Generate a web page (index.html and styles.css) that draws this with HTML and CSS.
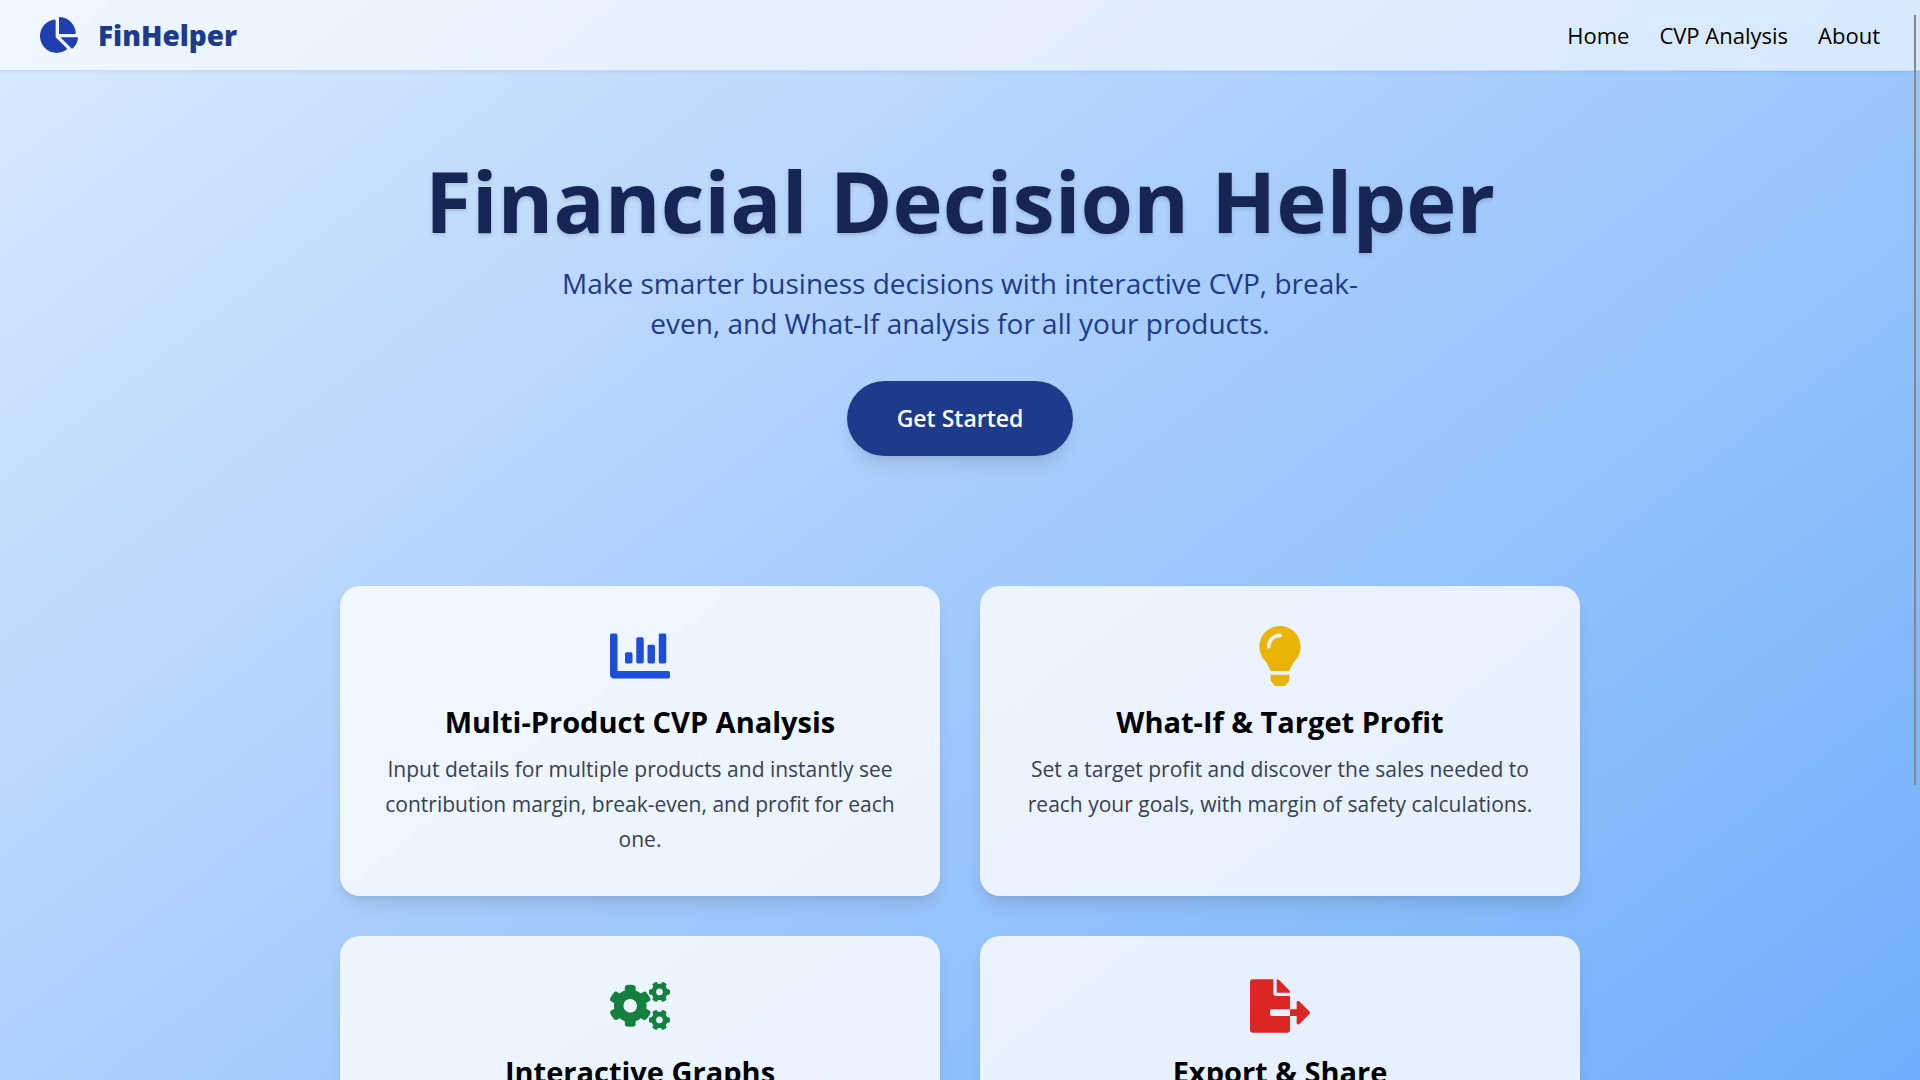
FILE: index.html
```html
<!DOCTYPE html>
<html lang="en">
<head>
<meta charset="utf-8">
<meta name="viewport" content="width=device-width, initial-scale=1">
<title>FinHelper</title>
<link rel="stylesheet" href="styles.css">
</head>
<body>
<header class="navbar">
  <a class="brand" href="#">
    <svg class="brand-icon" viewBox="0 0 544 512" aria-hidden="true"><path d="M527.79 288H290.5l158.03 158.03c6.04 6.04 15.98 6.53 22.19.68 38.7-36.46 65.32-85.61 73.13-140.86 1.34-9.46-6.51-17.85-16.06-17.85zm-15.83-64.8C503.72 103.74 408.26 8.28 288.8.04 279.68-.59 272 7.1 272 16.24V240h223.77c9.14 0 16.82-7.68 16.19-16.8zM224 288V50.71c0-9.55-8.39-17.4-17.84-16.06C86.99 51.49-4.1 155.6.14 280.37 4.5 408.51 114.83 513.59 243.03 511.98c50.4-.63 96.97-16.87 135.26-44.03 7.9-5.6 8.42-17.23 1.57-24.08L224 288z"/></svg>
    <span class="brand-name">FinHelper</span>
  </a>
  <nav class="links">
    <a href="#">Home</a>
    <a href="#cvp">CVP Analysis</a>
    <a href="#about">About</a>
  </nav>
</header>
<main>
  <section class="hero">
    <h1 class="title">Financial Decision Helper</h1>
    <p class="subtitle">Make smarter business decisions with interactive CVP, break-even, and What-If analysis for all your products.</p>
    <button class="cta" type="button">Get Started</button>
  </section>
  <section class="features">
    <article class="card">
      <svg class="card-icon blue" viewBox="0 0 512 512" aria-hidden="true"><path d="M332.8 320h38.4c6.4 0 12.8-6.4 12.8-12.8V172.8c0-6.4-6.4-12.8-12.8-12.8h-38.4c-6.4 0-12.8 6.4-12.8 12.8v134.4c0 6.4 6.4 12.8 12.8 12.8zm96 0h38.4c6.4 0 12.8-6.4 12.8-12.8V76.8c0-6.4-6.4-12.8-12.8-12.8h-38.4c-6.4 0-12.8 6.4-12.8 12.8v230.4c0 6.4 6.4 12.8 12.8 12.8zm-288 0h38.4c6.4 0 12.8-6.4 12.8-12.8v-70.4c0-6.4-6.4-12.8-12.8-12.8h-38.4c-6.4 0-12.8 6.4-12.8 12.8v70.4c0 6.4 6.4 12.8 12.8 12.8zm96 0h38.4c6.4 0 12.8-6.4 12.8-12.8V108.8c0-6.4-6.4-12.8-12.8-12.8h-38.4c-6.4 0-12.8 6.4-12.8 12.8v198.4c0 6.4 6.4 12.8 12.8 12.8zM496 384H64V80c0-8.84-7.16-16-16-16H16C7.16 64 0 71.16 0 80v336c0 17.67 14.33 32 32 32h464c8.84 0 16-7.16 16-16v-32c0-8.84-7.16-16-16-16z"/></svg>
      <h2 class="card-title">Multi-Product CVP Analysis</h2>
      <p class="card-text">Input details for multiple products and instantly see contribution margin, break-even, and profit for each one.</p>
    </article>
    <article class="card">
      <svg class="card-icon yellow" viewBox="0 0 352 512" aria-hidden="true"><path d="M96.06 454.35c.01 6.29 1.87 12.45 5.36 17.69l17.09 25.69a31.99 31.99 0 0 0 26.64 14.28h61.71a31.99 31.99 0 0 0 26.64-14.28l17.09-25.69a31.989 31.989 0 0 0 5.36-17.69l.04-38.35H96.01l.05 38.35zM0 176c0 44.37 16.45 84.85 43.56 115.78 16.52 18.85 42.36 58.23 52.21 91.45.04.26.07.52.11.78h160.24c.04-.26.07-.51.11-.78 9.85-33.22 35.69-72.6 52.21-91.45C335.55 260.85 352 220.37 352 176 352 78.61 272.91-.3 175.45 0 73.44.31 0 82.97 0 176zm176-80c-44.11 0-80 35.89-80 80 0 8.84-7.16 16-16 16s-16-7.16-16-16c0-61.76 50.24-112 112-112 8.84 0 16 7.16 16 16s-7.16 16-16 16z"/></svg>
      <h2 class="card-title">What-If &amp; Target Profit</h2>
      <p class="card-text">Set a target profit and discover the sales needed to reach your goals, with margin of safety calculations.</p>
    </article>
    <article class="card">
      <svg class="card-icon green" viewBox="0 0 640 512" aria-hidden="true"><path d="M512.1 191l-8.2 14.3c-3 5.3-9.4 7.5-15.1 5.4-11.8-4.4-22.6-10.7-32.1-18.6-4.6-3.8-5.8-10.5-2.8-15.7l8.2-14.3c-6.9-8-12.3-17.3-15.9-27.4h-16.5c-6 0-11.2-4.3-12.2-10.3-2-12-2.1-24.6 0-37.1 1-6 6.2-10.4 12.2-10.4h16.5c3.6-10.1 9-19.4 15.9-27.4l-8.2-14.3c-3-5.2-1.9-11.9 2.8-15.7 9.5-7.9 20.4-14.2 32.1-18.6 5.7-2.1 12.1.1 15.1 5.4l8.2 14.3c10.5-1.9 21.2-1.9 31.7 0L552 6.3c3-5.3 9.4-7.5 15.1-5.4 11.8 4.4 22.6 10.7 32.1 18.6 4.6 3.8 5.8 10.5 2.8 15.7l-8.2 14.3c6.9 8 12.3 17.3 15.9 27.4h16.5c6 0 11.2 4.3 12.2 10.3 2 12 2.1 24.6 0 37.1-1 6-6.2 10.4-12.2 10.4h-16.5c-3.6 10.1-9 19.4-15.9 27.4l8.2 14.3c3 5.2 1.9 11.9-2.8 15.7-9.5 7.9-20.4 14.2-32.1 18.6-5.7 2.1-12.1-.1-15.1-5.4l-8.2-14.3c-10.4 1.9-21.2 1.9-31.7 0zm-10.5-58.8c38.5 29.6 82.4-14.3 52.8-52.8-38.5-29.7-82.4 14.3-52.8 52.8zM386.3 286.1l33.7 16.8c10.1 5.8 14.5 18.1 10.5 29.1-8.9 24.2-26.4 46.4-42.6 65.8-7.4 8.9-20.2 11.1-30.3 5.3l-29.1-16.8c-16 13.7-34.6 24.6-54.9 31.7v33.6c0 11.6-8.3 21.6-19.7 23.6-24.6 4.2-50.4 4.4-75.9 0-11.5-2-20-11.9-20-23.6V418c-20.3-7.2-38.9-18-54.9-31.7L74 403c-10 5.8-22.9 3.6-30.3-5.3-16.2-19.4-33.3-41.6-42.2-65.7-4-10.9.4-23.2 10.5-29.1l33.3-16.8c-3.9-20.9-3.9-42.4 0-63.4L12 205.8c-10.1-5.8-14.6-18.1-10.5-29 8.9-24.2 26-46.4 42.2-65.8 7.4-8.9 20.2-11.1 30.3-5.3l29.1 16.8c16-13.7 34.6-24.6 54.9-31.7V57.1c0-11.5 8.2-21.5 19.6-23.5 24.6-4.2 50.5-4.4 76-.1 11.5 2 20 11.9 20 23.6v33.6c20.3 7.2 38.9 18 54.9 31.7l29.1-16.8c10-5.8 22.9-3.6 30.3 5.3 16.2 19.4 33.2 41.6 42.1 65.8 4 10.9.1 23.2-10 29.1l-33.7 16.8c3.9 21 3.9 42.5 0 63.5zm-117.6 21.1c59.2-77-28.7-164.9-105.7-105.7-59.2 77 28.7 164.9 105.7 105.7zm243.4 182.7l-8.2 14.3c-3 5.3-9.4 7.5-15.1 5.4-11.8-4.4-22.6-10.7-32.1-18.6-4.6-3.8-5.8-10.5-2.8-15.7l8.2-14.3c-6.9-8-12.3-17.3-15.9-27.4h-16.5c-6 0-11.2-4.3-12.2-10.3-2-12-2.1-24.6 0-37.1 1-6 6.2-10.4 12.2-10.4h16.5c3.6-10.1 9-19.4 15.9-27.4l-8.2-14.3c-3-5.2-1.9-11.9 2.8-15.7 9.5-7.9 20.4-14.2 32.1-18.6 5.7-2.1 12.1.1 15.1 5.4l8.2 14.3c10.5-1.9 21.2-1.9 31.7 0l8.2-14.3c3-5.3 9.4-7.5 15.1-5.4 11.8 4.4 22.6 10.7 32.1 18.6 4.6 3.8 5.8 10.5 2.8 15.7l-8.2 14.3c6.9 8 12.3 17.3 15.9 27.4h16.5c6 0 11.2 4.3 12.2 10.3 2 12 2.1 24.6 0 37.1-1 6-6.2 10.4-12.2 10.4h-16.5c-3.6 10.1-9 19.4-15.9 27.4l8.2 14.3c3 5.2 1.9 11.9-2.8 15.7-9.5 7.9-20.4 14.2-32.1 18.6-5.7 2.1-12.1-.1-15.1-5.4l-8.2-14.3c-10.4 1.9-21.2 1.9-31.7 0zM501.6 431c38.5 29.6 82.4-14.3 52.8-52.8-38.5-29.6-82.4 14.3-52.8 52.8z"/></svg>
      <h2 class="card-title">Interactive Graphs</h2>
      <p class="card-text">Explore break-even charts that update as you change prices, costs, and volumes.</p>
    </article>
    <article class="card">
      <svg class="card-icon red" viewBox="0 0 576 512" aria-hidden="true"><path d="M384 121.9c0-6.3-2.5-12.4-7-16.9L279.1 7c-4.5-4.5-10.6-7-17-7H256v128h128zM571 308l-95.7-96.4c-10.1-10.1-27.4-3-27.4 11.3V288h-64v64h64v65.2c0 14.3 17.3 21.4 27.4 11.3L571 332c6.6-6.6 6.6-17.4 0-24zm-379 28v-32c0-8.8 7.2-16 16-16h176V160H248c-13.2 0-24-10.8-24-24V0H24C10.7 0 0 10.7 0 24v464c0 13.3 10.7 24 24 24h336c13.3 0 24-10.7 24-24V352H208c-8.8 0-16-7.2-16-16z"/></svg>
      <h2 class="card-title">Export &amp; Share</h2>
      <p class="card-text">Download your results and share them with your team.</p>
    </article>
  </section>
</main>
<div class="scroll-thumb" aria-hidden="true"></div>
</body>
</html>
```
FILE: styles.css
```css
*,
*::before,
*::after {
  box-sizing: border-box;
}

html {
  scrollbar-width: none;
}

body {
  margin: 0;
  font-family: "Segoe UI", "Open Sans", "Noto Sans", sans-serif;
  color: #000;
  background: linear-gradient(to bottom right, #dbeafe, #60a5fa) no-repeat;
}

h1,
h2,
p {
  margin: 0;
}

a {
  color: inherit;
  text-decoration: none;
}

.navbar {
  position: sticky;
  top: 0;
  z-index: 10;
  display: flex;
  align-items: center;
  justify-content: space-between;
  padding: 15px 40px;
  background: rgba(255, 255, 255, 0.6);
  border-bottom: 1px solid #bfdbfe;
  box-shadow: 0 1px 3px rgba(0, 0, 0, 0.06);
}

.brand {
  display: flex;
  align-items: center;
  gap: 20px;
  height: 40px;
}

.brand-icon {
  width: 38px;
  height: 36px;
  fill: #1e40af;
}

.brand-name {
  font-size: 28px;
  line-height: 40px;
  font-weight: 800;
  color: #1e3a8a;
}

.links {
  display: flex;
  gap: 30px;
  font-size: 22px;
  line-height: 35px;
}

.hero {
  display: flex;
  flex-direction: column;
  align-items: center;
  padding: 84px 40px 80px;
  text-align: center;
}

.title {
  margin-bottom: 18px;
  font-size: 85px;
  line-height: 90px;
  font-weight: 700;
  color: #172554;
  text-shadow: 0 2px 4px rgba(0, 0, 0, 0.15);
}

.subtitle {
  max-width: 840px;
  margin-bottom: 38px;
  font-size: 28px;
  line-height: 40px;
  color: #1e3a8a;
}

.cta {
  padding: 20px 50px;
  border: 0;
  border-radius: 40px;
  font-family: inherit;
  font-size: 23px;
  line-height: 35px;
  font-weight: 600;
  color: #fff;
  background: #1e3a8a;
  box-shadow: 0 12px 19px -4px rgba(0, 0, 0, 0.1), 0 5px 8px -5px rgba(0, 0, 0, 0.1);
  cursor: pointer;
}

.features {
  display: grid;
  grid-template-columns: repeat(2, 1fr);
  gap: 40px;
  max-width: 1320px;
  margin: 0 auto;
  padding: 50px 40px 262px;
}

.card {
  display: flex;
  flex-direction: column;
  align-items: center;
  padding: 40px 40px 39px;
  border-radius: 20px;
  text-align: center;
  background: rgba(255, 255, 255, 0.8);
  box-shadow: 0 12px 19px -4px rgba(0, 0, 0, 0.1), 0 5px 8px -5px rgba(0, 0, 0, 0.1);
}

.card-icon {
  width: 60px;
  height: 60px;
  margin-bottom: 16px;
}

.blue {
  fill: #1d4ed8;
}

.yellow {
  fill: #eab308;
}

.green {
  fill: #15803d;
}

.red {
  fill: #dc2626;
}

.card-title {
  margin-bottom: 10px;
  font-size: 29px;
  line-height: 40px;
  font-weight: 700;
}

.card-text {
  font-size: 21px;
  line-height: 35px;
  color: #374151;
}

.scroll-thumb {
  position: fixed;
  top: 15px;
  right: 4px;
  z-index: 20;
  width: 2px;
  height: calc(72vh - 8px);
  background: #888;
}
```
